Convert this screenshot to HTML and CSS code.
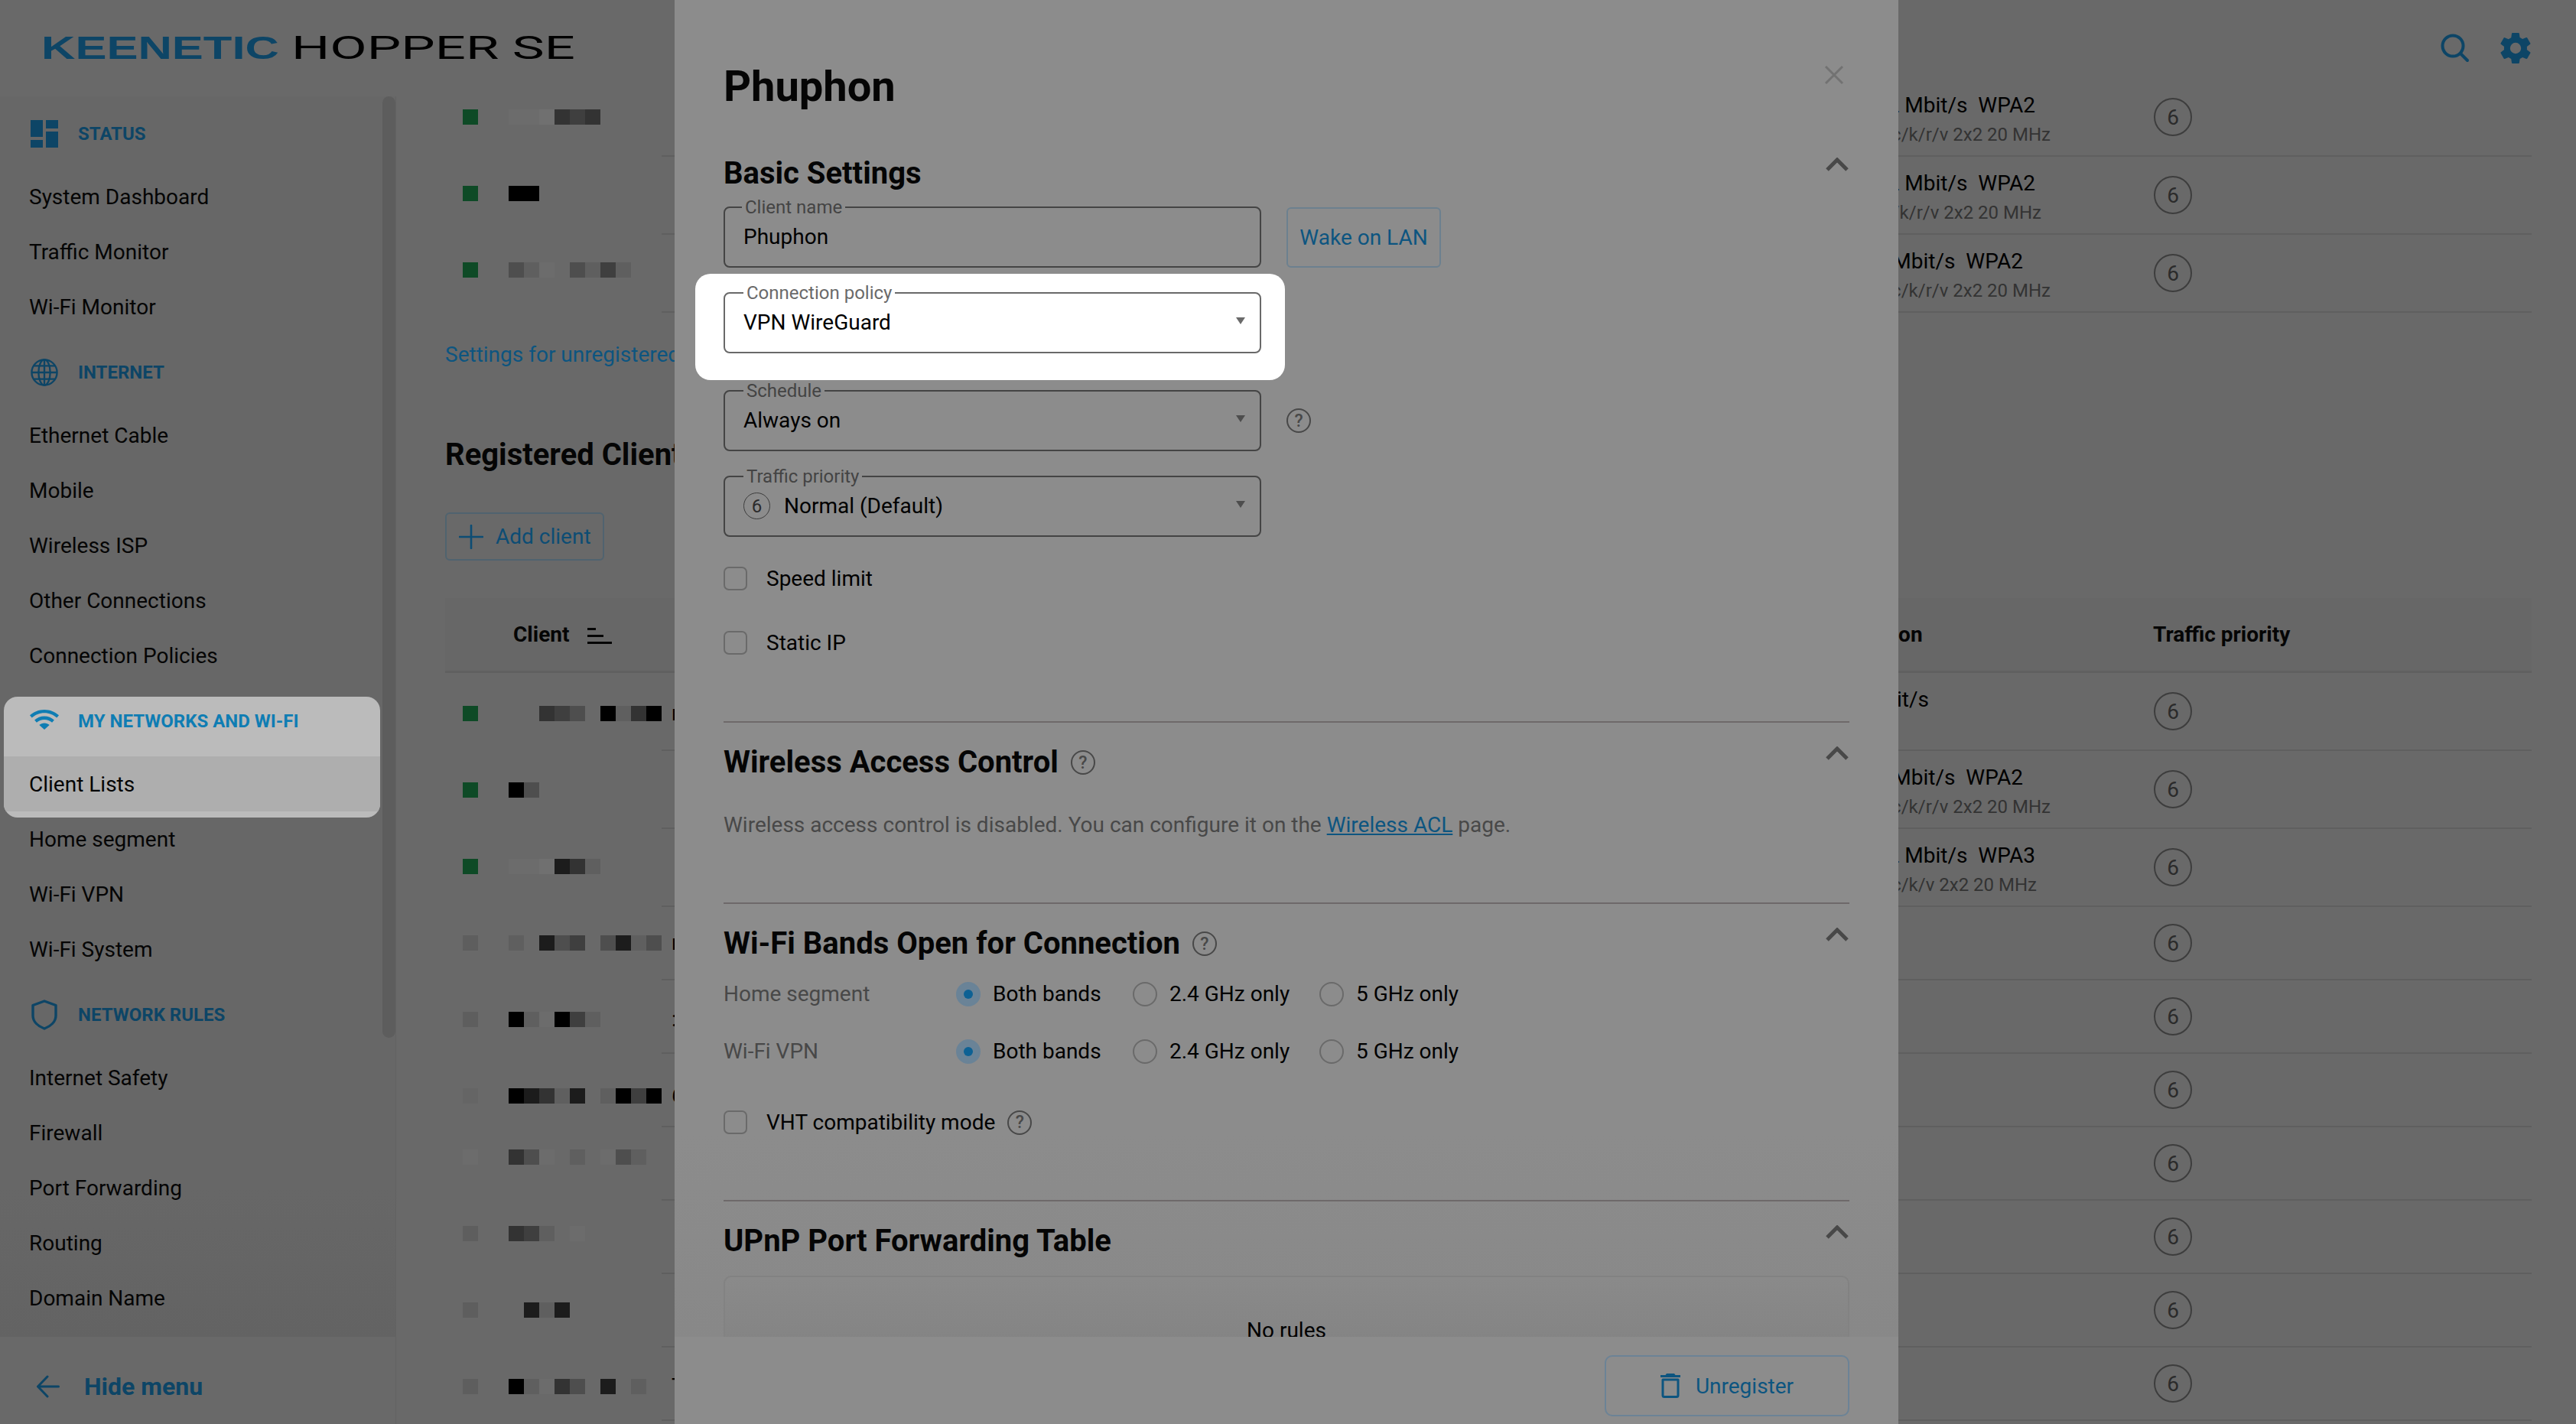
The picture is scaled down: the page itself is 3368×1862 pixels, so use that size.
FILE: index.html
```html
<!DOCTYPE html>
<html lang="en">
<head>
<meta charset="utf-8">
<title>Keenetic Hopper SE</title>
<link rel="stylesheet" href="styles.css">
</head>
<body>
<div class="page">
  <header class="topbar">
    <div class="logo"><span class="logo-brand">KEENETIC</span><span class="logo-model">HOPPER SE</span></div>
    <div class="top-actions">
      <svg class="ic-search" viewBox="0 0 38 38"><circle cx="16" cy="16" r="13.5" fill="none" stroke="currentColor" stroke-width="4"/><path d="M26 26l9 9" stroke="currentColor" stroke-width="4" stroke-linecap="round"/></svg>
      <svg class="ic-gear" viewBox="0 0 24 24"><path fill="currentColor" fill-rule="evenodd" d="M19.4 13c.04-.33.06-.66.06-1s-.02-.67-.06-1l2.1-1.65a.5.5 0 0 0 .12-.64l-2-3.46a.5.5 0 0 0-.61-.22l-2.49 1a7.3 7.3 0 0 0-1.73-1l-.38-2.65A.49.49 0 0 0 13.93 2H10a.49.49 0 0 0-.49.42l-.38 2.65c-.63.26-1.2.6-1.73 1l-2.49-1a.5.5 0 0 0-.61.22l-2 3.46a.5.5 0 0 0 .12.64L4.53 11c-.04.33-.07.66-.07 1s.03.67.07 1l-2.11 1.65a.5.5 0 0 0-.12.64l2 3.46c.12.22.38.3.61.22l2.49-1c.53.4 1.1.74 1.73 1l.38 2.65c.04.24.25.42.49.42h3.93c.25 0 .46-.18.49-.42l.38-2.65c.63-.26 1.2-.6 1.73-1l2.49 1c.23.08.49 0 .61-.22l2-3.46a.5.5 0 0 0-.12-.64L19.4 13zM12 15.6a3.6 3.6 0 1 1 0-7.2 3.6 3.6 0 0 1 0 7.2z"/></svg>
    </div>
  </header>

  <div class="workspace">
    <aside class="sidebar">
      <div class="side-scroll">
        <nav class="nav">
          <div class="nav-head">
            <svg class="nav-ic" viewBox="0 0 36 36"><path fill="currentColor" d="M0 0h16v22H0zM0 26h16v10H0zM20 0h16v11H20zM20 15h16v21H20z"/></svg>
            <span>STATUS</span>
          </div>
          <a class="nav-item">System Dashboard</a>
          <a class="nav-item">Traffic Monitor</a>
          <a class="nav-item">Wi-Fi Monitor</a>
          <div class="nav-head">
            <svg class="nav-ic" viewBox="0 0 40 40"><g fill="none" stroke="currentColor" stroke-width="2.6"><circle cx="20" cy="20" r="18.4"/><ellipse cx="20" cy="20" rx="8.5" ry="18.4"/><path d="M20 2v36M2 20h36M5 10.500h30M5 29.500h30"/></g></svg>
            <span>INTERNET</span>
          </div>
          <a class="nav-item">Ethernet Cable</a>
          <a class="nav-item">Mobile</a>
          <a class="nav-item">Wireless ISP</a>
          <a class="nav-item">Other Connections</a>
          <a class="nav-item">Connection Policies</a>
          <div class="nav-focus">
            <div class="nav-head nav-head--focus">
              <svg class="nav-ic nav-ic--wifi" viewBox="0 0 38 26"><path fill="currentColor" d="M19 0C11.600 0 5.200 2.800 0 7.300l2.700 3.200C7.100 6.600 12.700 4.200 19 4.200s11.900 2.400 16.300 6.300L38 7.300C32.800 2.800 26.400 0 19 0z"/><path fill="currentColor" d="M19 8.500c-5 0-9.400 1.900-12.900 5l2.800 3.300c2.700-2.400 6.200-3.900 10.100-3.900s7.400 1.500 10.100 3.900l2.800-3.300c-3.500-3.100-7.900-5-12.900-5z"/><path fill="currentColor" d="M19 17.500c-2.600 0-4.900 1-6.700 2.500L19 26l6.700-6c-1.800-1.500-4.100-2.500-6.700-2.500z"/></svg>
              <span>MY NETWORKS AND WI-FI</span>
            </div>
            <a class="nav-item nav-item--active">Client Lists</a>
          </div>
          <a class="nav-item">Home segment</a>
          <a class="nav-item">Wi-Fi VPN</a>
          <a class="nav-item">Wi-Fi System</a>
          <div class="nav-head">
            <svg class="nav-ic" viewBox="0 0 36 40"><path fill="none" stroke="currentColor" stroke-width="3.400" stroke-linejoin="round" d="M18 2 L33 7.500 V21 C33 29 26 35 18 38 C10 35 3 29 3 21 V7.500 Z"/></svg>
            <span>NETWORK RULES</span>
          </div>
          <a class="nav-item">Internet Safety</a>
          <a class="nav-item">Firewall</a>
          <a class="nav-item">Port Forwarding</a>
          <a class="nav-item">Routing</a>
          <a class="nav-item">Domain Name</a>
        </nav>
        <div class="side-thumb"></div>
      </div>
      <div class="side-foot">
        <svg class="ic-back" viewBox="0 0 30 30"><path fill="none" stroke="currentColor" stroke-width="3" stroke-linecap="round" stroke-linejoin="round" d="M28.500 15H2M14 2 1.500 15 14 28"/></svg>
        <span>Hide menu</span>
      </div>
    </aside>

    <main class="main">
      <div class="tcols tcols--scrolled">
        <div class="pxcol">
          <div class="px"><i class="on"></i><b class="s6"></b><b class="s6"></b><b class="s7"></b><b class="s2"></b><b class="s3"></b><b class="s2"></b></div>
          <div class="px"><i class="on"></i><b class="s0"></b><b class="s0"></b></div>
          <div class="px"><i class="on"></i><b class="s4"></b><b class="s5"></b><b class="s6"></b><b></b><b class="s4"></b><b class="s5"></b><b class="s3"></b><b class="s5"></b></div>
        </div>
        <div class="rcol">
          <div class="row"><div class="conn"><span class="l1 e20">72 Mbit/s&nbsp; WPA2</span><span class="l2">b/g/n/ac/k/r/v 2x2 20 MHz</span></div><span class="prio">6</span></div>
          <div class="row"><div class="conn"><span class="l1 e20">72 Mbit/s&nbsp; WPA2</span><span class="l2 e12">b/g/n/ac/k/r/v 2x2 20 MHz</span></div><span class="prio">6</span></div>
          <div class="row"><div class="conn"><span class="l1 e36">72 Mbit/s&nbsp; WPA2</span><span class="l2">b/g/n/ac/k/r/v 2x2 20 MHz</span></div><span class="prio">6</span></div>
        </div>
      </div>

      <a class="unreg-link">Settings for unregistered clients</a>
      <h2 class="main-title">Registered Clients</h2>
      <button class="add-btn"><svg viewBox="0 0 32 32"><path d="M16 1v30M1 16h30" stroke="currentColor" stroke-width="2.600" stroke-linecap="round"/></svg><span>Add client</span></button>

      <div class="thead">
        <div class="th-client"><span>Client</span><svg viewBox="0 0 32 21"><path fill="currentColor" d="M0 0h11v3H0zM0 9h21v3H0zM0 18h32v3H0z"/></svg></div>
        <div class="th-conn">Connection</div>
        <div class="th-prio">Traffic priority</div>
      </div>

      <div class="tcols">
        <div class="pxcol pxcol--low">
          <div class="px"><i class="on"></i><b></b><b></b><b class="s2"></b><b class="s3"></b><b class="s4"></b><b></b><b class="s0"></b><b class="s5"></b><b class="s2"></b><b class="s0"></b><em>m</em></div>
          <div class="px"><i class="on"></i><b class="s0"></b><b class="s4"></b></div>
          <div class="px"><i class="on"></i><b class="s6"></b><b class="s6"></b><b class="s7"></b><b class="s1"></b><b class="s2"></b><b class="s5"></b></div>
          <div class="px"><i class="off"></i><b class="s5"></b><b></b><b class="s1"></b><b class="s4"></b><b class="s3"></b><b></b><b class="s4"></b><b class="s1"></b><b class="s5"></b><b class="s4"></b><em>r</em></div>
          <div class="px"><i class="off"></i><b class="s0"></b><b class="s5"></b><b class="s6"></b><b class="s0"></b><b class="s3"></b><b class="s5"></b><b></b><b></b><b></b><b></b><em>:</em></div>
          <div class="px"><i class="off2"></i><b class="s0"></b><b class="s1"></b><b class="s2"></b><b class="s5"></b><b class="s1"></b><b></b><b class="s5"></b><b class="s0"></b><b class="s3"></b><b class="s0"></b><em>6</em></div>
          <div class="px px--tight"><i class="off3"></i><b class="s2"></b><b class="s4"></b><b class="s6"></b><b></b><b class="s5"></b><b></b><b class="s6"></b><b class="s4"></b><b class="s5"></b></div>
          <div class="px"><i class="off"></i><b class="s2"></b><b class="s3"></b><b class="s5"></b><b></b><b class="s6"></b></div>
          <div class="px"><i class="off"></i><b></b><b class="s1"></b><b class="s5"></b><b class="s1"></b></div>
          <div class="px"><i class="off"></i><b class="s0"></b><b class="s5"></b><b class="s6"></b><b class="s2"></b><b class="s4"></b><b></b><b class="s1"></b><b></b><b class="s5"></b><b></b><em>T</em></div>
        </div>
        <div class="rcol">
          <div class="row"><div class="conn"><span class="l1 e159">100 Mbit/s</span><span class="l2 hidden">&nbsp;</span></div><span class="prio">6</span></div>
          <div class="row"><div class="conn"><span class="l1 e36">72 Mbit/s&nbsp; WPA2</span><span class="l2">b/g/n/ac/k/r/v 2x2 20 MHz</span></div><span class="prio">6</span></div>
          <div class="row"><div class="conn"><span class="l1 e20">72 Mbit/s&nbsp; WPA3</span><span class="l2 e18">b/g/n/ac/k/v 2x2 20 MHz</span></div><span class="prio">6</span></div>
          <div class="row row--s"><span class="conn"></span><span class="prio">6</span></div>
          <div class="row row--s"><span class="conn"></span><span class="prio">6</span></div>
          <div class="row row--s"><span class="conn"></span><span class="prio">6</span></div>
          <div class="row row--s"><span class="conn"></span><span class="prio">6</span></div>
          <div class="row row--s"><span class="conn"></span><span class="prio">6</span></div>
          <div class="row row--s"><span class="conn"></span><span class="prio">6</span></div>
          <div class="row row--s"><span class="conn"></span><span class="prio">6</span></div>
        </div>
      </div>
    </main>
  </div>

  <section class="modal">
    <button class="modal-close" aria-label="Close"><svg viewBox="0 0 26 26"><path d="M2 2l22 22M24 2 2 24" stroke="currentColor" stroke-width="3"/></svg></button>
    <div class="modal-body">
      <h1 class="modal-title">Phuphon</h1>

      <div class="sec-head sec-head--basic"><h2>Basic Settings</h2><svg class="chev" viewBox="0 0 32 19"><path d="M3 16 16 3l13 13" fill="none" stroke="currentColor" stroke-width="5"/></svg></div>

      <div class="field-row field-row--first">
        <fieldset class="field"><legend>Client name</legend><span class="val">Phuphon</span></fieldset>
        <button class="wake">Wake on LAN</button>
      </div>

      <div class="focus">
        <fieldset class="field field--focus"><legend>Connection policy</legend><span class="val">VPN WireGuard</span><span class="caret caret--focus"></span></fieldset>
      </div>

      <div class="field-row">
        <fieldset class="field"><legend>Schedule</legend><span class="val">Always on</span><span class="caret"></span></fieldset>
        <span class="help help--field">?</span>
      </div>

      <div class="field-row field-row--gap">
        <fieldset class="field"><legend>Traffic priority</legend><span class="prio prio--sm">6</span><span class="val">Normal (Default)</span><span class="caret"></span></fieldset>
      </div>

      <label class="check check--speed"><i class="box"></i><span>Speed limit</span></label>
      <label class="check check--ip"><i class="box"></i><span>Static IP</span></label>

      <div class="sec sec--wac">
        <div class="sec-head sec-head--ruled"><h2>Wireless Access Control</h2><span class="help">?</span><svg class="chev" viewBox="0 0 32 19"><path d="M3 16 16 3l13 13" fill="none" stroke="currentColor" stroke-width="5"/></svg></div>
        <p class="note">Wireless access control is disabled. You can configure it on the <a>Wireless ACL</a> page.</p>
      </div>

      <div class="sec sec--bands">
        <div class="sec-head sec-head--ruled"><h2>Wi-Fi Bands Open for Connection</h2><span class="help">?</span><svg class="chev" viewBox="0 0 32 19"><path d="M3 16 16 3l13 13" fill="none" stroke="currentColor" stroke-width="5"/></svg></div>
        <div class="bands bands--first">
          <span class="band-name">Home segment</span>
          <label class="radio"><i class="dot dot--on"></i><span>Both bands</span></label>
          <label class="radio"><i class="dot"></i><span>2.4 GHz only</span></label>
          <label class="radio"><i class="dot"></i><span>5 GHz only</span></label>
        </div>
        <div class="bands">
          <span class="band-name">Wi-Fi VPN</span>
          <label class="radio"><i class="dot dot--on"></i><span>Both bands</span></label>
          <label class="radio"><i class="dot"></i><span>2.4 GHz only</span></label>
          <label class="radio"><i class="dot"></i><span>5 GHz only</span></label>
        </div>
        <label class="check check--vht"><i class="box"></i><span>VHT compatibility mode</span><span class="help">?</span></label>
      </div>

      <div class="sec sec--upnp">
        <div class="sec-head sec-head--ruled"><h2>UPnP Port Forwarding Table</h2><svg class="chev" viewBox="0 0 32 19"><path d="M3 16 16 3l13 13" fill="none" stroke="currentColor" stroke-width="5"/></svg></div>
        <div class="empty">No rules</div>
      </div>
    </div>
    <footer class="modal-foot">
      <button class="unreg"><svg viewBox="0 0 26 32"><path fill="currentColor" d="M8 0h10l1.500 2H26v3H0V2h6.500z"/><path fill="none" stroke="currentColor" stroke-width="3" stroke-linejoin="round" d="M3 8h20v20.500a2 2 0 0 1-2 2H5a2 2 0 0 1-2-2z"/></svg><span>Unregister</span></button>
    </footer>
  </section>
</div>
</body>
</html>
```
FILE: styles.css
```css
* { box-sizing: border-box; }
html, body { margin: 0; height: 100%; }
body {
  background: #696969;
  color: #000;
  font-family: Roboto, "Liberation Sans", sans-serif;
  font-size: 28px;
  overflow: hidden;
}
button { font: inherit; background: none; padding: 0; }
h1, h2, p { margin: 0; }
i, em { font-style: normal; }

.page { position: relative; width: 3368px; height: 1862px; overflow: hidden; display: flex; flex-direction: column; }

/* top bar */
.topbar { height: 126px; flex: none; display: flex; align-items: center; justify-content: space-between; padding: 0 55px 0 54px; background: #696969; position: relative; z-index: 2; }
.logo { display: flex; margin-top: -2px; line-height: 44px; white-space: nowrap; }
.logo-brand { width: 327px; display: block; font: 700 43px/44px "Liberation Sans", sans-serif; color: #0d4566; transform: scaleX(1.43); transform-origin: left center; }
.logo-model { display: block; font: 400 43px/44px Roboto, sans-serif; color: #000; transform: scaleX(1.64); transform-origin: left center; }
.top-actions { display: flex; align-items: center; gap: 36px; color: #0d4566; }
.ic-search { width: 38px; height: 38px; }
.ic-gear { width: 48px; height: 48px; }

.workspace { flex: 1; display: flex; min-height: 0; }

/* sidebar */
.sidebar { width: 518px; flex: none; display: flex; flex-direction: column; background: #676767; border-right: 1px solid #626262; }
.side-scroll { flex: 1; min-height: 0; display: flex; overflow: hidden; background: linear-gradient(#676767 88%, #636363); }
.nav { width: 500px; flex: none; padding-top: 17px; }
.side-thumb { width: 17px; height: 1231px; border-radius: 9px; background: #5d5d5d; }
.nav-head { height: 78px; padding: 0 0 14px 38px; display: flex; align-items: center; gap: 26px; color: #0d4566; font-size: 24px; font-weight: 700; margin-top: 18px; }
.nav-head:first-child { margin-top: 0; }
.nav-ic { width: 36px; height: 40px; flex: none; margin-left: 2px; margin-right: 0; }
.nav-item { display: flex; align-items: center; height: 72px; padding-left: 38px; color: #050505; }
.nav-focus { width: 492px; margin: 18px 0 -8px 5px; padding-bottom: 8px; background: #bbb; border-radius: 18px; overflow: hidden; position: relative; }
.nav-head--focus { margin-top: 0; padding-left: 33px; color: #0f7db3; }
.nav-ic--wifi { width: 38px; height: 26px; margin-left: 1px; margin-right: -1px; margin-top: -5px; }
.nav-item--active { background: #aeaeae; padding-left: 33px; }
.side-foot { height: 114px; flex: none; display: flex; align-items: center; padding: 16px 0 0 48px; gap: 32px; color: #0d4566; font-size: 32px; font-weight: 700; background: #696969; }
.ic-back { width: 30px; height: 30px; }

/* main */
.main { flex: 1; min-width: 0; padding: 0 58px 0 64px; overflow: hidden; display: flex; flex-direction: column; }
.tcols { display: flex; flex: none; }
.tcols--scrolled { margin-top: -23px; }
.pxcol { width: 283px; flex: none; }
.pxcol--low { margin-top: 3px; }
.px { height: 100px; display: flex; align-items: center; padding-left: 23px; }
.px--tight { height: 100px; margin-top: -20px; }
.px i { width: 20px; height: 20px; margin-right: 40px; flex: none; }
.px b { width: 20px; height: 20px; flex: none; }
.px em { font-size: 28px; margin-left: 13px; line-height: 20px; }
.on { background: #0e4a26; }
.off { background: #5e5e5e; }
.off2 { background: #656565; }
.off3 { background: #6c6c6c; }
.s0 { background: #000; }
.s1 { background: #1c1c1c; }
.s2 { background: #333; }
.s3 { background: #3f3f3f; }
.s4 { background: #4e4e4e; }
.s5 { background: #5f5f5f; }
.s6 { background: #6c6c6c; }
.s7 { background: #707070; }
.rcol { flex: 1; min-width: 0; }
.row { height: 102px; display: flex; align-items: center; border-bottom: 2px solid #5f5f5f; }
.row--s { height: 96px; }
.conn { width: 1816px; flex: none; display: flex; flex-direction: column; align-items: flex-end; margin-right: 135px; padding-top: 8px; }
.l1 { font-size: 28px; line-height: 38px; white-space: nowrap; color: #000; }
.l2 { font-size: 24px; line-height: 38px; white-space: nowrap; color: #333; }
.hidden { visibility: hidden; }
.e12 { margin-right: 12px; }
.e18 { margin-right: 18px; }
.e20 { margin-right: 20px; }
.e36 { margin-right: 36px; }
.e159 { margin-right: 159px; }
.prio { width: 50px; height: 50px; flex: none; border: 2px solid #3d3d3d; border-radius: 50%; display: flex; align-items: center; justify-content: center; color: #2b2b2b; font-size: 28px; }

.unreg-link { color: #0d5580; margin-top: 36px; line-height: 38px; }
.main-title { font-size: 40px; font-weight: 700; line-height: 52px; margin-top: 86px; color: #050505; white-space: nowrap; }
.add-btn { width: 208px; height: 63px; margin-top: 49px; flex: none; border: 2px solid #50636f; border-radius: 6px; color: #0d4d74; display: flex; align-items: center; gap: 16px; padding-left: 16px; font-size: 28px; }
.add-btn svg { width: 32px; height: 32px; }
.thead { height: 98px; margin-top: 49px; flex: none; display: flex; align-items: center; background: #676767; border-bottom: 3px solid #606060; font-weight: 700; font-size: 28px; color: #050505; }
.th-client { width: 1788px; padding-left: 89px; display: flex; align-items: center; gap: 24px; flex: none; }
.th-client svg { width: 32px; height: 21px; margin-top: 4px; }
.th-conn { width: 445px; flex: none; white-space: nowrap; }
.th-prio { white-space: nowrap; }

/* modal */
.modal { position: absolute; left: 882px; top: 0; width: 1600px; height: 1862px; background: #8c8c8c; border-radius: 16px 16px 0 0; display: flex; flex-direction: column; z-index: 3; }
.modal-body { flex: 1; min-height: 0; overflow: hidden; padding: 0 64px; background: linear-gradient(#8c8c8c 85%, #888); }
.modal-close { position: absolute; left: 1503px; top: 85px; width: 26px; height: 26px; border: 0; color: #727272; }
.modal-close svg { display: block; width: 26px; height: 26px; }
.modal-title { font-size: 56px; font-weight: 700; line-height: 80px; padding-top: 73px; height: 153px; color: #050505; }

.sec-head { position: relative; display: flex; align-items: center; gap: 16px; height: 48px; margin-top: 48px; }
.sec-head--basic { margin-top: 50px; }
.sec-head h2 { font-size: 40px; font-weight: 700; line-height: 48px; color: #050505; white-space: nowrap; }
.chev { position: absolute; right: 0; top: 3px; width: 32px; height: 19px; color: #484848; }
.sec { border-top: 2px solid #6e696a; margin-top: 87px; }
.sec--wac { margin-top: 87px; }
.sec--bands { margin-top: 81px; }
.sec-head--ruled { margin-top: 28px; }
.note { margin-top: 38px; line-height: 40px; color: #484848; }
.note a { color: #0d5580; text-decoration: underline; }

.field-row { display: flex; align-items: flex-end; gap: 33px; }
.field-row--first { margin-top: 6px; }
.field-row--gap { margin-top: 19px; }
.field { position: relative; width: 703px; height: 93px; margin: 0; padding: 0 40px 0 24px; border: 2px solid #444; border-radius: 8px; display: flex; align-items: center; flex: none; min-width: 0; }
.field legend { margin-left: 0; padding: 0 4px; font-size: 24px; line-height: 28px; color: #444; }
.field-row--first legend { margin-left: -2px; }
.val { color: #000; line-height: 36px; margin-top: -14px; }
.caret { position: absolute; right: 19px; top: 18px; width: 0; height: 0; border-left: 6px solid transparent; border-right: 6px solid transparent; border-top: 9px solid #4d4d4d; }
.caret--focus { border-top-color: #6a6a6a; }
.wake { width: 202px; height: 79px; flex: none; border: 2px solid #6c808f; border-radius: 6px; color: #0d5580; white-space: nowrap; }
.focus { width: 771px; height: 139px; margin: 8px 0 0 -37px; padding: 11px 0 0 37px; background: #fff; border-radius: 20px; position: relative; }
.field--focus { border-color: #696969; }
.field--focus legend { color: #6a6a6a; }
.help { width: 32px; height: 32px; flex: none; border: 2.500px solid #484848; border-radius: 50%; color: #484848; font-size: 23px; font-weight: 500; display: flex; align-items: center; justify-content: center; line-height: 1; }
.help--field { margin-bottom: 24px; }
.sec-head .help { margin-left: 0; }
.prio--sm { width: 35px; height: 35px; border-width: 1.500px; font-size: 24px; margin-right: 18px; margin-top: -14px; margin-left: 0; }

.check { display: flex; align-items: center; gap: 25px; height: 31px; color: #000; }
.check--speed { margin-top: 39px; }
.check--ip { margin-top: 53px; }
.check--vht { margin-top: 62px; gap: 25px; }
.check--vht .help { margin-left: -9px; }
.box { width: 31px; height: 31px; border: 2px solid #6a6a6a; border-radius: 7px; flex: none; }

.bands { display: grid; grid-template-columns: 304px 231px 244px auto; align-items: center; height: 32px; margin-top: 43px; }
.bands--first { margin-top: 25px; }
.band-name { color: #484848; }
.radio { display: flex; align-items: center; gap: 16px; white-space: nowrap; }
.dot { width: 32px; height: 32px; border-radius: 50%; border: 2px solid #6a6a6a; flex: none; display: flex; align-items: center; justify-content: center; }
.dot--on { background: #6a8397; border-color: #6a8397; }
.dot--on::after { content: ""; width: 12px; height: 12px; border-radius: 50%; background: #0d6194; }

.sec--upnp { margin-top: 86px; }
.empty { height: 200px; margin-top: 21px; padding-top: 52px; text-align: center; line-height: 36px; border: 2px solid #828282; border-radius: 10px; background: linear-gradient(#8a8a8a, #838383 50%); }

.modal-foot { height: 114px; flex: none; display: flex; justify-content: flex-end; padding: 24px 64px 0 0; background: #8c8c8c; }
.unreg { width: 320px; height: 80px; border: 2px solid #6c8396; border-radius: 10px; color: #0d5580; display: flex; align-items: center; justify-content: center; gap: 20px; }
.unreg svg { width: 26px; height: 32px; }
```
